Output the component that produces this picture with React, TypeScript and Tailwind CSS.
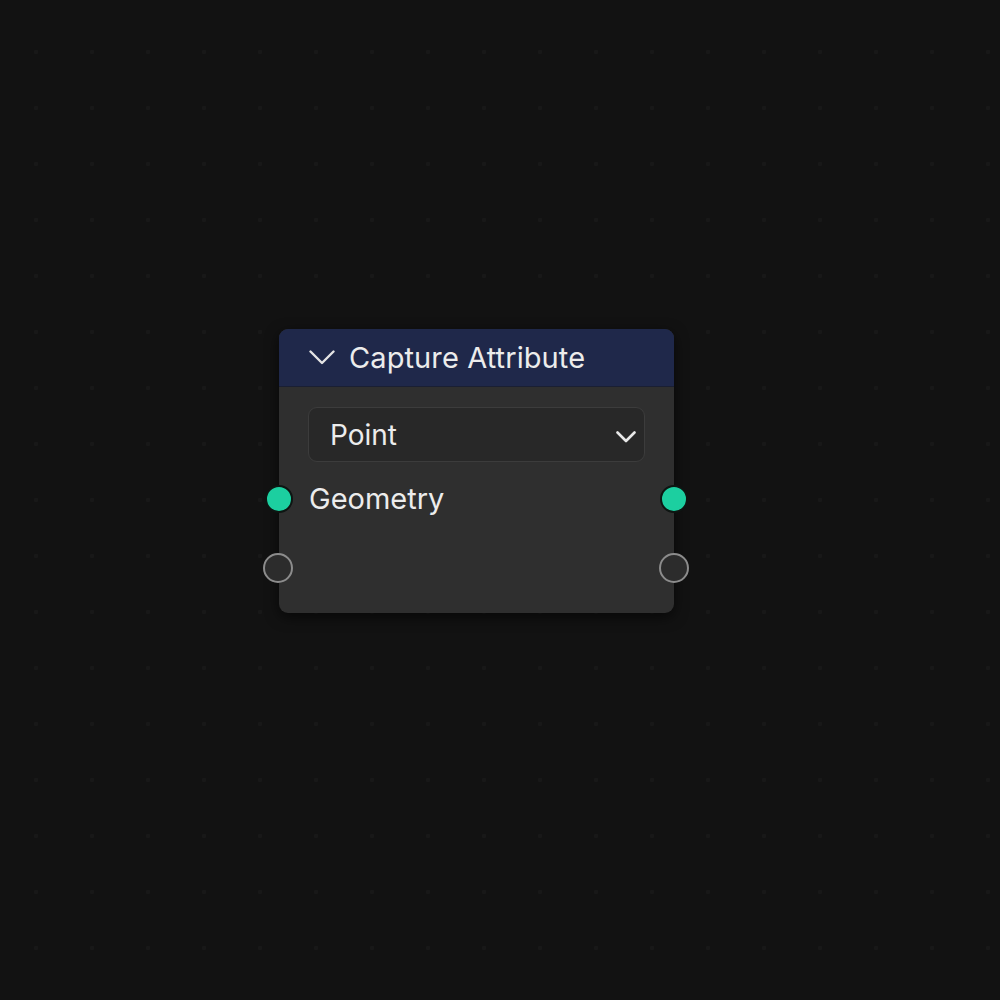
function Socket({ filled, side }: { filled?: boolean; side: 'left' | 'right' }) {
  if (filled) {
    const pos = side === 'left' ? 'left-[-14px]' : 'right-[-14px]';
    return (
      <span
        className={`absolute ${pos} top-1/2 -translate-y-1/2 w-[28px] h-[28px] rounded-full bg-[#1ccfa0] border-[2px] border-[#0e1512]`}
      />
    );
  }
  const pos = side === 'left' ? 'left-[-16px]' : 'right-[-15px]';
  return (
    <span
      className={`absolute ${pos} top-1/2 -translate-y-1/2 w-[30px] h-[30px] rounded-full bg-[#2c2c2c] border-[2.5px] border-[#8c8c8c]`}
    />
  );
}

export default function App() {
  return (
    <div
      className="w-full h-screen bg-[#121212] pt-[329px] pl-[279px]"
      style={{
        backgroundImage: 'radial-gradient(circle, #181818 2px, transparent 2.5px)',
        backgroundSize: '56px 56px',
        backgroundPosition: '8px 24px',
        fontFamily: 'Inter, "Noto Sans", sans-serif',
      }}
    >
      <div className="w-[395px] rounded-[9px] bg-[#2f2f2f] shadow-[0_4px_14px_rgba(0,0,0,0.6)]">
        {/* Header */}
        <div className="h-[58px] rounded-t-[9px] bg-[#1f284a] flex items-center pl-[30px] gap-[14px] border-b border-[#1a1f33]">
          <svg width="26" height="15" viewBox="0 0 26 15" fill="none">
            <path d="M1.5 1.5 L13 13 L24.5 1.5" stroke="#e4e4e4" strokeWidth="2.4" strokeLinecap="round" strokeLinejoin="round" />
          </svg>
          <span className="text-[29px] text-[#ececec] tracking-[0.1px]">Capture Attribute</span>
        </div>

        {/* Body */}
        <div className="pt-[20px] pb-[18px]">
          <div className="mx-[29px] h-[55px] rounded-[9px] bg-[#282828] border border-[#3c3c3c] flex items-center justify-between pl-[21px] pr-[8px]">
            <span className="text-[28px] text-[#ececec]">Point</span>
            <svg width="20" height="12" viewBox="0 0 20 12" fill="none" className="mt-[4px]">
              <path d="M1.5 1.5 L10 10 L18.5 1.5" stroke="#e8e8e8" strokeWidth="2.6" strokeLinecap="round" strokeLinejoin="round" />
            </svg>
          </div>

          <div className="relative mt-[10px] h-[54px] flex items-center pl-[30px]">
            <Socket filled side="left" />
            <span className="text-[29px] text-[#ececec]">Geometry</span>
            <Socket filled side="right" />
          </div>

          <div className="relative mt-[15px] h-[54px]">
            <Socket side="left" />
            <Socket side="right" />
          </div>
        </div>
      </div>
    </div>
  );
}
